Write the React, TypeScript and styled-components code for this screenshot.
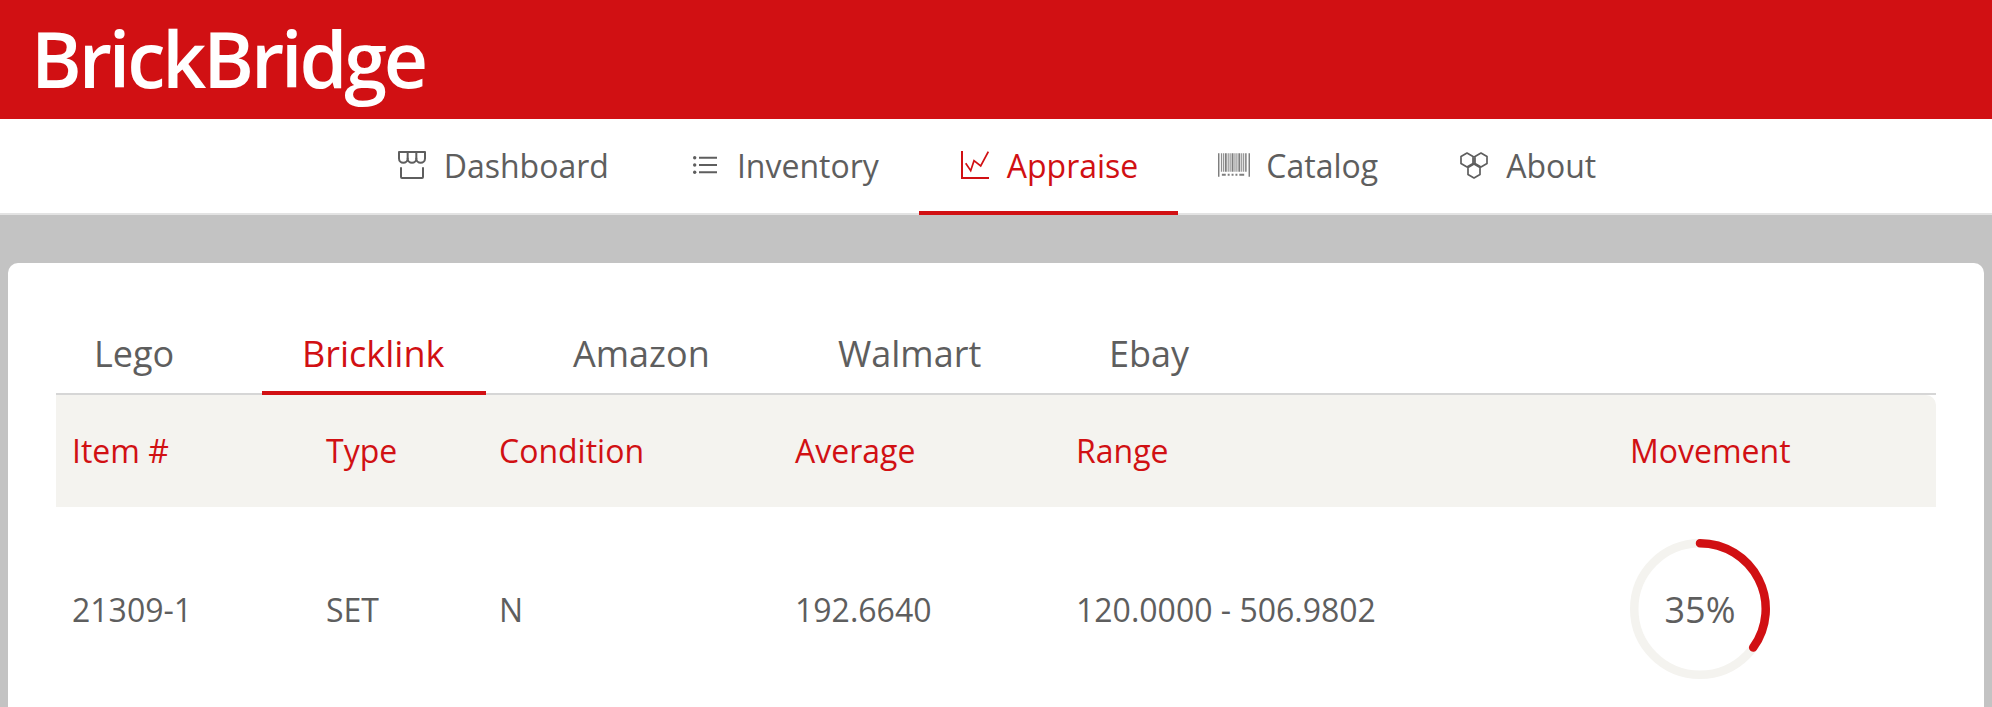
import styled, { createGlobalStyle } from 'styled-components';

const RED = '#d11013';
const INK = '#5e5e5e';

const GlobalStyle = createGlobalStyle`
  html, body {
    margin: 0;
    height: 100%;
    overflow: hidden;
    background: #c3c3c3;
    font-family: "Open Sans", "Liberation Sans", sans-serif;
  }
`;

const Header = styled.header`
  height: 119px;
  box-sizing: border-box;
  background: ${RED};
  padding: 0 0 2px 31px;
  display: flex;
  align-items: center;
`;

const Logo = styled.h1`
  margin: 0;
  color: #fff;
  font-size: 77px;
  font-weight: 600;
  letter-spacing: -3.1px;
  line-height: 117px;
`;

const Nav = styled.nav`
  height: 94px;
  background: #fff;
  border-bottom: 2px solid #e3e3e3;
  display: flex;
  justify-content: center;
`;

const NavItem = styled.a<{ $active?: boolean }>`
  height: 96px;
  box-sizing: border-box;
  padding: 0 40px;
  display: flex;
  align-items: center;
  gap: 16px;
  font-size: 32px;
  color: ${(p) => (p.$active ? RED : INK)};
  border-bottom: 4px solid ${(p) => (p.$active ? RED : 'transparent')};
`;

const IconBox = styled.span`
  width: 32px;
  display: flex;
  justify-content: center;
`;

const Card = styled.main`
  margin: 48px 8px 0;
  padding: 40px 48px 0;
  background: #fff;
  border-radius: 10px;
  height: 500px;
`;

const Tabs = styled.div`
  display: flex;
  height: 90px;
  border-bottom: 2px solid #d6d6d6;
`;

const Tab = styled.a<{ $active?: boolean; $width: number; $pad: number }>`
  width: ${(p) => p.$width}px;
  height: 92px;
  box-sizing: border-box;
  display: flex;
  align-items: center;
  padding: 12px 0 0 ${(p) => p.$pad}px;
  font-size: 36px;
  color: ${(p) => (p.$active ? RED : INK)};
  border-bottom: 4px solid ${(p) => (p.$active ? RED : 'transparent')};
`;

const Row = styled.div`
  display: grid;
  grid-template-columns: 254px 173px 296px 281px 554px 322px;
  align-items: center;
  box-sizing: border-box;
  padding-bottom: 2px;
`;

const HeadRow = styled(Row)`
  height: 112px;
  background: #f4f3ef;
  border-radius: 0 10px 0 0;
  color: ${RED};
`;

const BodyRow = styled(Row)`
  height: 206px;
  color: ${INK};
`;

const Cell = styled.div`
  padding-left: 16px;
  font-size: 32px;
`;

const Dial = styled.div`
  position: relative;
  width: 140px;
  height: 140px;
`;

const DialLabel = styled.span`
  position: absolute;
  inset: 0;
  display: flex;
  align-items: center;
  justify-content: center;
  font-size: 36px;
  color: ${INK};
`;

const ShopIcon = () => (
  <svg width="28" height="28" viewBox="0 0 28 28" fill="none" stroke="currentColor" strokeWidth="2" strokeLinecap="round" strokeLinejoin="round">
    <path d="M1 1h26v6.500a4.300 4.300 0 0 1-8.670 0 4.330 4.330 0 0 1-8.660 0A4.300 4.300 0 0 1 1 7.500z" />
    <path d="M9.670 1v6.500M18.330 1v6.500M3 17v9a1 1 0 0 0 1 1h20a1 1 0 0 0 1-1v-9" />
  </svg>
);

const ListIcon = () => (
  <svg width="24" height="18" viewBox="0 0 24 18" fill="currentColor">
    <path d="M6 .8h18v2H6zM6 8h18v2H6zM6 15.200h18v2H6z" />
    <circle cx="1.700" cy="1.800" r="1.700" />
    <circle cx="1.700" cy="9" r="1.700" />
    <circle cx="1.700" cy="16.200" r="1.700" />
  </svg>
);

const ChartIcon = () => (
  <svg width="28" height="28" viewBox="0 0 28 28" fill="none" stroke="currentColor" strokeWidth="1.700">
    <path d="M1 0v27h27" strokeWidth="2" />
    <path d="M4.700 12.300l5 7.400L13 9.700l6.700 5.300L27.300.7" />
  </svg>
);

const BarcodeIcon = () => (
  <svg width="33" height="24" viewBox="0 0 33 24" fill="currentColor" opacity="0.8">
    <path d="M0 0h1.500v24H0zM3 0h1v19H3zM5 0h1v19H5zM7 0h2v19H7zM10 0h1v19h-1zM12 0h1v19h-1zM14 0h2v19h-2zM17 0h1v19h-1zM19 0h1v19h-1zM21 0h2v19h-2zM24 0h1v19h-1zM26 0h1v19h-1zM28 0h1.500v19H28zM31.500 0H33v24h-1.500zM4 21h4v2H4zM10 21h2v2h-2zM14 21h2v2h-2zM18 21h2v2h-2zM22 21h5v2h-5z" />
  </svg>
);

const BlocksIcon = () => (
  <svg width="28" height="27" viewBox="0 0 28 27" fill="none" stroke="currentColor" strokeWidth="1.700" strokeLinejoin="round">
    <path d="M7 1l6 3.500v7L7 15l-6-3.500v-7zM21 1l6 3.500v7L21 15l-6-3.500v-7zM14 12l6 3.500v7L14 26l-6-3.500v-7z" />
    <path d="M13 4.500l2 0M14 5.500v6.500" strokeWidth="1.200" />
  </svg>
);

const navItems = [
  { label: 'Dashboard', icon: <ShopIcon /> },
  { label: 'Inventory', icon: <ListIcon /> },
  { label: 'Appraise', icon: <ChartIcon />, active: true },
  { label: 'Catalog', icon: <BarcodeIcon /> },
  { label: 'About', icon: <BlocksIcon /> },
];

const tabs = [
  { label: 'Lego', width: 206, pad: 38 },
  { label: 'Bricklink', width: 224, pad: 40 },
  { label: 'Amazon', width: 266, pad: 87 },
  { label: 'Walmart', width: 266, pad: 86 },
  { label: 'Ebay', width: 266, pad: 91 },
];

const App = () => (
  <>
    <GlobalStyle />
    <Header>
      <Logo>BrickBridge</Logo>
    </Header>
    <Nav>
      {navItems.map((item) => (
        <NavItem key={item.label} $active={item.active}>
          <IconBox>{item.icon}</IconBox>
          {item.label}
        </NavItem>
      ))}
    </Nav>
    <Card>
      <Tabs>
        {tabs.map((tab) => (
          <Tab key={tab.label} $active={tab.label === 'Bricklink'} $width={tab.width} $pad={tab.pad}>
            {tab.label}
          </Tab>
        ))}
      </Tabs>
      <HeadRow>
        <Cell>Item #</Cell>
        <Cell>Type</Cell>
        <Cell>Condition</Cell>
        <Cell>Average</Cell>
        <Cell>Range</Cell>
        <Cell>Movement</Cell>
      </HeadRow>
      <BodyRow>
        <Cell>21309-1</Cell>
        <Cell>SET</Cell>
        <Cell>N</Cell>
        <Cell>192.6640</Cell>
        <Cell>120.0000 - 506.9802</Cell>
        <Cell>
          <Dial>
            <svg width="140" height="140" viewBox="0 0 140 140" fill="none" strokeWidth="8.500">
              <circle cx="70" cy="70" r="65.750" stroke="#f4f3ef" />
              <path d="M70 4.250A65.750 65.750 0 0 1 123.200 108.600" stroke={RED} strokeLinecap="round" />
            </svg>
            <DialLabel>35%</DialLabel>
          </Dial>
        </Cell>
      </BodyRow>
    </Card>
  </>
);

export default App;
